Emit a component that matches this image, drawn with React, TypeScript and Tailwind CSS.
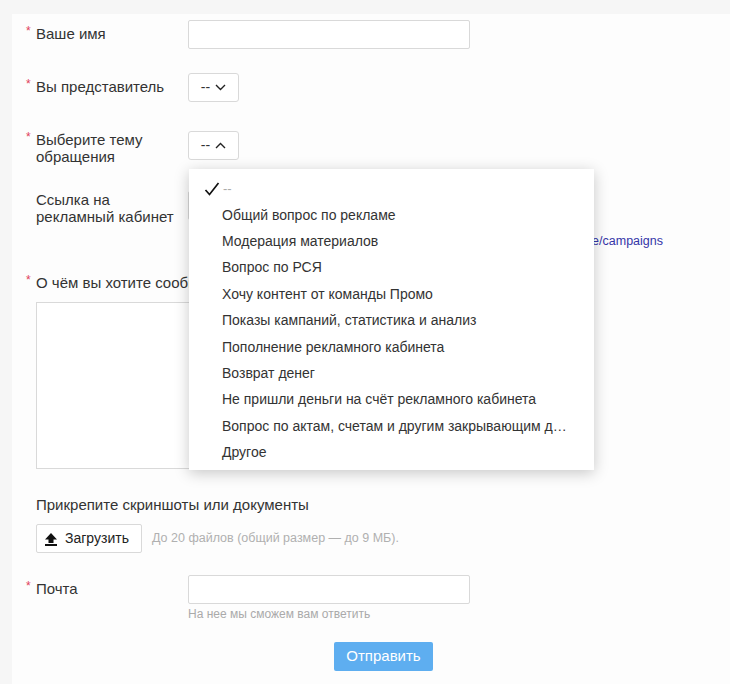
import React from 'react'

const font = { fontFamily: '"Liberation Sans", Arial, sans-serif' }

const topics = [
  'Общий вопрос по рекламе',
  'Модерация материалов',
  'Вопрос по РСЯ',
  'Хочу контент от команды Промо',
  'Показы кампаний, статистика и анализ',
  'Пополнение рекламного кабинета',
  'Возврат денег',
  'Не пришли деньги на счёт рекламного кабинета',
  'Вопрос по актам, счетам и другим закрывающим д…',
  'Другое',
]

const input = 'h-[29px] w-[282px] border border-[#d9d9d9] bg-white rounded-[2px]'

function Chevron({ up }: { up?: boolean }) {
  return (
    <svg width="11" height="7" viewBox="0 0 11 7" fill="none" stroke="#222" strokeWidth="1.4">
      {up ? <polyline points="1,6 5.5,1.5 10,6" /> : <polyline points="1,1 5.5,5.5 10,1" />}
    </svg>
  )
}

function Label({ children, req, wide }: { children: React.ReactNode; req?: boolean; wide?: boolean }) {
  return (
    <div className={`flex shrink-0 text-[15px] leading-[17px] text-[#333] ${wide ? 'whitespace-nowrap' : 'w-[162px]'}`}>
      <span className="w-[10px] shrink-0 text-[12px] leading-[12px] text-[#e0405a]">{req ? '*' : ''}</span>
      <span>{children}</span>
    </div>
  )
}

function SelectBtn({ up }: { up?: boolean }) {
  return (
    <div className="flex h-[29px] w-[51px] items-center justify-center gap-[5px] rounded-[3px] border border-[#d9d9d9] bg-white text-[14px] text-[#333]">
      <span>--</span>
      <Chevron up={up} />
    </div>
  )
}

export default function App() {
  return (
    <div style={font} className="min-h-[684px] w-[730px] bg-[#f6f6f6] pt-[14px] pl-[12px]">
      <div className="min-h-[670px] bg-[#fdfdfd] pl-[14px] pt-[6px]">
        {/* name */}
        <div className="flex">
          <div className="pt-[5px]"><Label req>Ваше имя</Label></div>
          <div className={input} />
        </div>

        <div className="mt-[24px] flex">
          <div className="pt-[5px]"><Label req>Вы представитель</Label></div>
          <SelectBtn />
        </div>

        <div className="mt-[29px] flex">
          <Label req>Выберите тему<br />обращения</Label>
          <div className="relative">
            <SelectBtn up />
            {/* open topic menu */}
            <div className="absolute left-[1px] top-[38px] z-10 w-[405px] bg-white pt-[7px] pb-[4px] shadow-[0_3px_14px_rgba(0,0,0,0.22)]">
              <div className="flex h-[26px] items-center pl-[15px]">
                <svg width="16" height="14" viewBox="0 0 16 14" fill="none" stroke="#111" strokeWidth="1.7">
                  <polyline points="1.5,8 5.5,12.5 14.5,1" />
                </svg>
                <span className="ml-[3px] text-[13px] text-[#aaa]">--</span>
              </div>
              {topics.map((t) => (
                <div key={t} className="flex h-[26.4px] items-center pl-[33px] text-[14px] text-[#333] whitespace-nowrap">{t}</div>
              ))}
            </div>
          </div>
        </div>

        <div className="mt-[26px] flex">
          <Label>Ссылка на<br />рекламный кабинет</Label>
          <div>
            <div className={input} />
            <div className="mt-[13px] w-[475px] text-right whitespace-nowrap text-[12.5px] leading-[16px] text-[#3535a8]">Например, https://ads.vk.com/hq/home/campaigns</div>
          </div>
        </div>

        <div className="mt-[25px]"><Label req wide>О чём вы хотите сообщить?</Label></div>
        <div className="ml-[10px] mt-[11px] h-[167px] w-[434px] border border-[#d9d9d9] bg-white" />

        <div className="ml-[10px] mt-[27px] text-[15px] leading-[17px] text-[#333]">Прикрепите скриншоты или документы</div>
        <div className="ml-[10px] mt-[11px] flex items-center">
          <div className="flex h-[29px] w-[106px] items-center gap-[7px] rounded-[2px] border border-[#d9d9d9] bg-white pl-[7px] text-[14px] text-[#222]">
            <svg width="14" height="14" viewBox="0 0 14 14" fill="#111">
              <path d="M7 1 L13 7.5 H9.5 V11 H4.5 V7.5 H1 Z" />
              <rect x="1" y="12" width="12" height="2" />
            </svg>
            Загрузить
          </div>
          <span className="ml-[10px] text-[12.5px] text-[#b0b0b0]">До 20 файлов (общий размер — до 9 МБ).</span>
        </div>

        <div className="mt-[22px] flex">
          <div className="pt-[5px]"><Label req>Почта</Label></div>
          <div>
            <div className={input} />
            <div className="mt-[3px] text-[12px] leading-[14px] text-[#aaa]">На нее мы сможем вам ответить</div>
          </div>
        </div>

        <div className="ml-[308px] mt-[21px] flex h-[29px] w-[99px] items-center justify-center rounded-[2px] bg-[#5eaef0] text-[15px] text-white">
          Отправить
        </div>
      </div>
    </div>
  )
}
